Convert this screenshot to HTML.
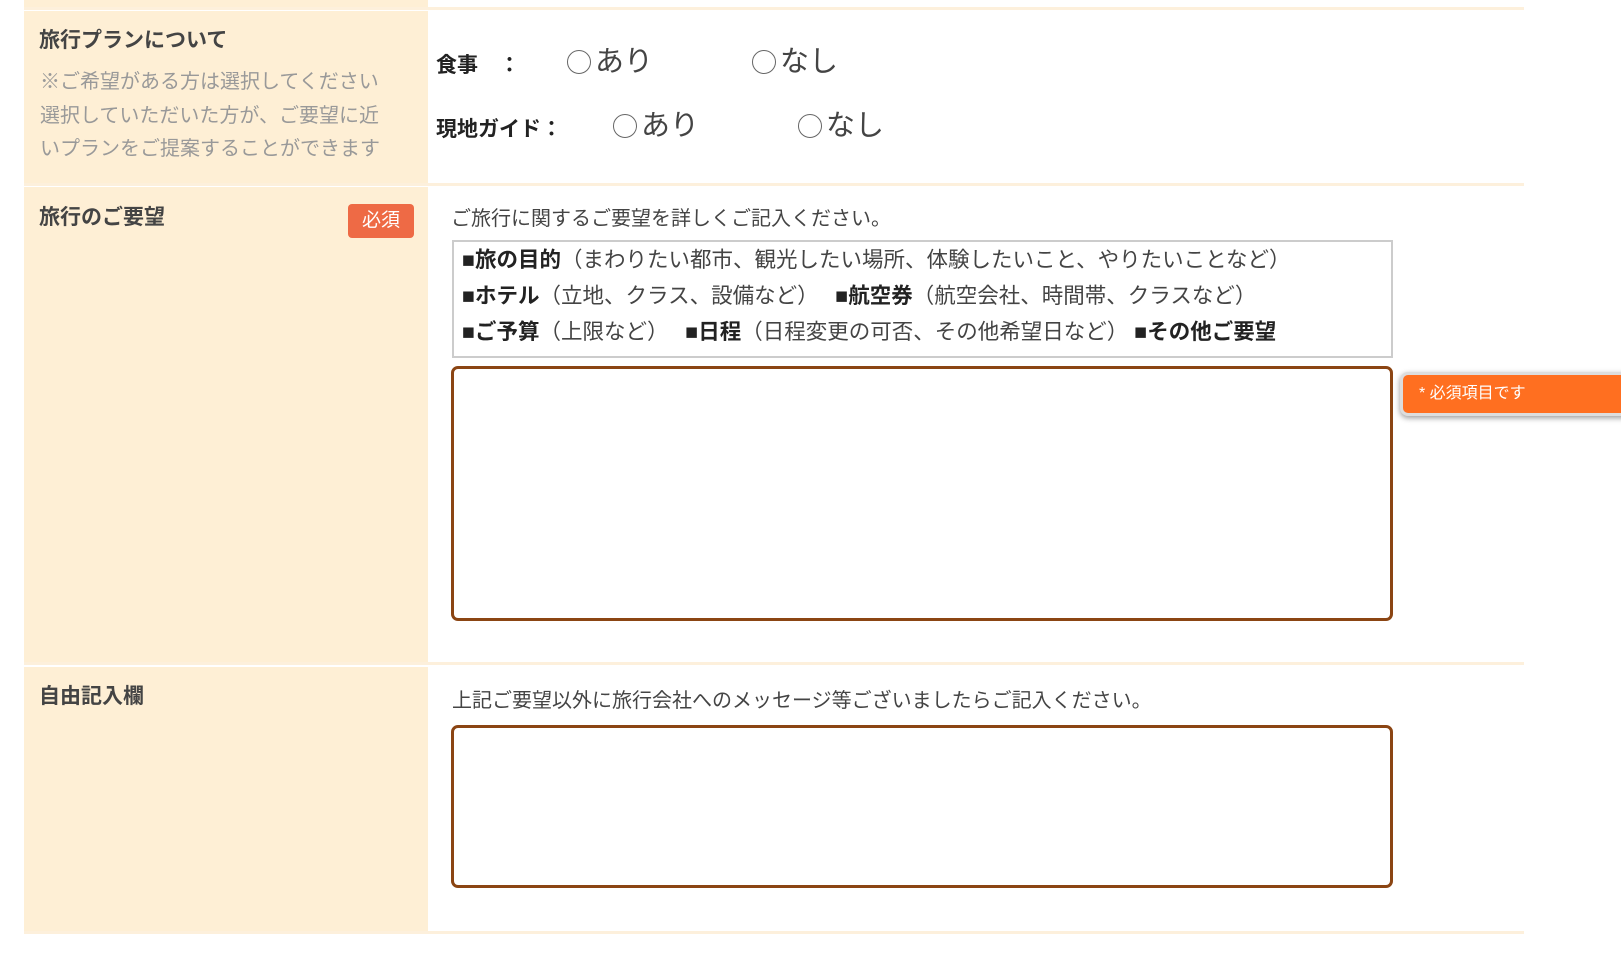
<!DOCTYPE html>
<html><head><meta charset="utf-8"><style>
body{margin:0;width:1621px;height:955px;background:#fff;position:relative;overflow:hidden;font-family:"Liberation Sans","Noto Sans CJK JP",sans-serif;color:#333}
.a{position:absolute;white-space:nowrap;line-height:1}
.l{position:absolute;left:24px;width:404px;background:#feefd5}
.h{position:absolute;left:24px;width:1500px;height:3px;background:#fdf0dc}
.t{font-weight:bold;font-size:21px;color:#444}
.g{font-size:20px;color:#999}
.r{display:inline-block;width:24px;height:24px;border:1.5px solid #666;border-radius:50%;vertical-align:-3px;margin-right:4px;box-sizing:border-box}
.ta{position:absolute;border:3px solid #8b4513;border-radius:7px;box-sizing:border-box;background:#fff}
b{color:#222}
</style></head><body>
<div class="l" style="top:0;height:7px"></div>
<div class="h" style="top:7px"></div>
<div class="l" style="top:11px;height:172px"></div>
<div class="h" style="top:183px"></div>
<div class="l" style="top:187px;height:475px"></div>
<div class="h" style="top:662px"></div>
<div class="l" style="top:667px;height:265px"></div>
<div class="h" style="top:931px"></div>

<div class="a t" style="left:39px;top:30px">旅行プランについて</div>
<div class="a g" style="left:40px;top:72px">※ご希望がある方は選択してください</div>
<div class="a g" style="left:40px;top:106px">選択していただいた方が、ご要望に近</div>
<div class="a g" style="left:40px;top:139px">いプランをご提案することができます</div>

<div class="a t" style="left:436px;top:55px;color:#222">食事　：</div>
<div class="a" style="left:567px;top:48px;font-size:29px;color:#444"><span class="r"></span>あり</div>
<div class="a" style="left:752px;top:48px;font-size:29px;color:#444"><span class="r"></span>なし</div>
<div class="a t" style="left:436px;top:119px;color:#222">現地ガイド：</div>
<div class="a" style="left:613px;top:112px;font-size:29px;color:#444"><span class="r"></span>あり</div>
<div class="a" style="left:798px;top:112px;font-size:29px;color:#444"><span class="r"></span>なし</div>

<div class="a t" style="left:39px;top:207px">旅行のご要望</div>
<div class="a" style="left:348px;top:204px;width:66px;height:34px;background:#ee6a45;border-radius:4px;color:#fff;font-size:19px;line-height:34px;text-align:center">必須</div>

<div class="a" style="left:451px;top:209px;font-size:20px;color:#444">ご旅行に関するご要望を詳しくご記入ください。</div>
<div class="a" style="left:452px;top:240px;width:941px;height:118px;border:2px solid #ccc;box-sizing:border-box"></div>
<div class="a" style="left:462px;top:250px;font-size:21.5px;color:#444"><b>■旅の目的</b>（まわりたい都市、観光したい場所、体験したいこと、やりたいことなど）</div>
<div class="a" style="left:462px;top:286px;font-size:21.5px;color:#444"><b>■ホテル</b>（立地、クラス、設備など）　 <b>■航空券</b>（航空会社、時間帯、クラスなど）</div>
<div class="a" style="left:462px;top:322px;font-size:21.5px;color:#444"><b>■ご予算</b>（上限など）　 <b>■日程</b>（日程変更の可否、その他希望日など） <b>■その他ご要望</b></div>
<div class="ta" style="left:451px;top:366px;width:942px;height:255px"></div>
<div class="a" style="left:1400px;top:372px;width:240px;height:44px;box-sizing:border-box;border:3px solid #ddd;border-radius:8px;background:#ff6f20;box-shadow:0 2px 6px rgba(0,0,0,.4);color:#fff;font-size:16px;line-height:38px;padding-left:16px">* 必須項目です</div>

<div class="a t" style="left:39px;top:686px">自由記入欄</div>
<div class="a" style="left:452px;top:691px;font-size:20px;color:#444">上記ご要望以外に旅行会社へのメッセージ等ございましたらご記入ください。</div>
<div class="ta" style="left:451px;top:725px;width:942px;height:163px"></div>
</body></html>
